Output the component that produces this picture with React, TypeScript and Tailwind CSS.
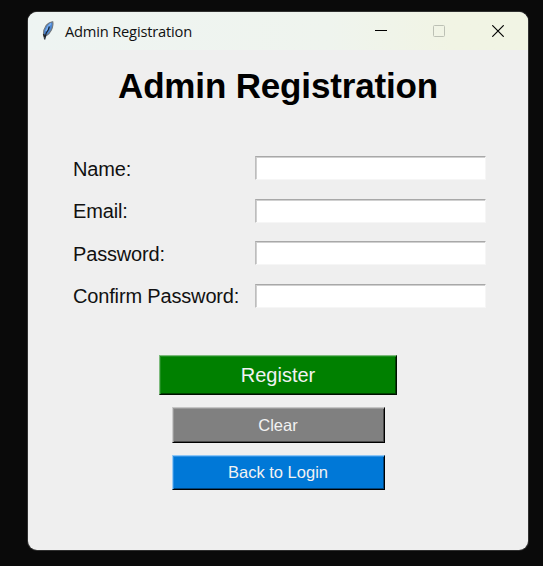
import React from "react";

const fields = [
  { label: "Name:", type: "text" },
  { label: "Email:", type: "text" },
  { label: "Password:", type: "password" },
  { label: "Confirm Password:", type: "password" },
];

function Feather() {
  return (
    <svg width="14" height="22" viewBox="0 0 14 22" className="shrink-0">
      <path d="M3.3 18 L2.4 14.5 Q2 10 5 5.7 Q8 2 11.7 1.7 Q12.7 5 10.4 10 Q8.5 14 4.9 16 Z" fill="#4b86d2" stroke="#73777a" strokeWidth="1.1" />
      <path d="M10 3.4 Q6.2 6.6 5 11" fill="none" stroke="#79aeee" strokeWidth="1.8" />
      <path d="M8.3 6.5 L7.5 9.5 L5.2 13 L3.6 19.5" fill="none" stroke="#18212d" strokeWidth="1.2" />
      <path d="M2.6 14 L3.7 17" stroke="#222" strokeWidth="1.5" />
    </svg>
  );
}

function TitleBar() {
  return (
    <header className="flex h-[38px] items-center bg-linear-to-r from-[#eef4f2] via-[#eff4ee] via-60% to-[#f1f4e4] to-85% pl-[13px]">
      <Feather />
      <span className="ml-[10px] whitespace-nowrap font-['Open_Sans','Noto_Sans',sans-serif] text-[14.7px] leading-5 tracking-[-0.2px] text-[#111]">
        Admin Registration
      </span>
      <div className="ml-auto flex h-full items-center">
        <button aria-label="Minimize" className="flex h-full w-[58px] items-center justify-center">
          <svg width="12" height="12" viewBox="0 0 12 12"><path d="M0 5.5H12" stroke="#000" /></svg>
        </button>
        <button aria-label="Maximize" className="flex h-full w-[58px] items-center justify-center">
          <svg width="12" height="12" viewBox="0 0 12 12"><rect x=".5" y=".5" width="11" height="11" rx="1" fill="none" stroke="#bdc1b5" /></svg>
        </button>
        <button aria-label="Close" className="flex h-full w-[60px] items-center justify-center">
          <svg width="12" height="12" viewBox="0 0 12 12"><path d="M.3.3 11.7 11.7M11.7.3.3 11.7" stroke="#000" strokeWidth="1.15" /></svg>
        </button>
      </div>
    </header>
  );
}

export default function App() {
  return (
    <div className="h-[566px] w-[543px] overflow-hidden bg-[#0a0a0a] pl-[28px] pt-[12px] font-['Liberation_Sans',Arial,sans-serif] text-black">
      <main className="h-[538px] w-[500px] overflow-hidden rounded-[9px] bg-[#efefef] shadow-[0_0_0_1px_#303030]">
        <TitleBar />
        <h1 className="mt-[16px] whitespace-nowrap text-center text-[35px] font-bold leading-[40px] tracking-[-0.16px]">Admin Registration</h1>
        <form className="mt-[50px] flex flex-col gap-[18.5px] pl-[45px]">
          {fields.map((f) => (
            <label key={f.label} className="flex h-[24px] items-center">
              <span className="w-[182px] whitespace-nowrap pt-[1px] text-[20px] leading-6 tracking-[-0.16px] text-[#111]">{f.label}</span>
              <input type={f.type} className="h-[24px] w-[231px] border border-b-[#f6f6f6] border-l-[#bdbdbd] border-r-[#f6f6f6] border-t-[#a8a8a8] bg-white shadow-[inset_1px_1px_0_#d0d0d0] outline-none" />
            </label>
          ))}
        </form>
        <div className="mt-[47px] flex flex-col items-center">
          <button className="h-[40px] w-[238px] border border-b-[#001000] border-l-[#7cba7c] border-r-[#001000] border-t-[#7cba7c] bg-[#008000] text-[20px] leading-6 text-[#f2f2f2] shadow-[inset_1px_1px_0_#1e8e1e,inset_-1px_-1px_0_#004200]">Register</button>
          <button className="mt-[12px] h-[36px] w-[213px] border border-b-black border-l-[#cccccc] border-r-black border-t-[#c4c4c4] bg-[#808080] text-[16.5px] leading-5 text-[#f2f2f2] shadow-[inset_1px_1px_0_#999999,inset_-1px_-1px_0_#4a4a4a]">Clear</button>
          <button className="mt-[12px] h-[35px] w-[213px] border border-b-black border-l-[#9accf4] border-r-black border-t-[#8cc6f6] bg-[#0078d7] text-[16.5px] leading-5 text-[#f2f2f2] shadow-[inset_1px_1px_0_#2e90e2,inset_-1px_-1px_0_#00447c]">Back to Login</button>
        </div>
      </main>
    </div>
  );
}
